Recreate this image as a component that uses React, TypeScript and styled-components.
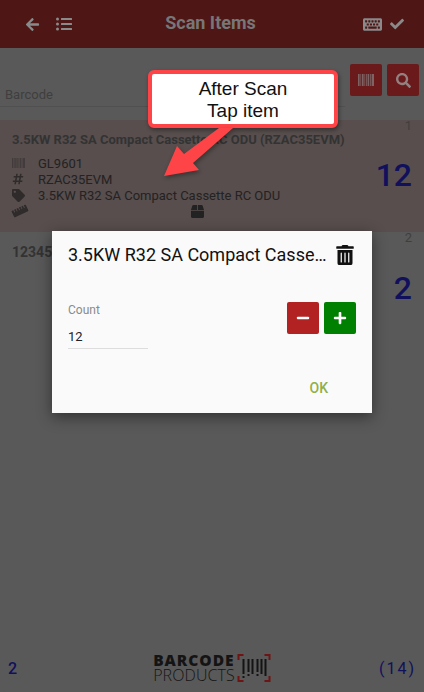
import React from 'react';
import styled, { createGlobalStyle } from 'styled-components';
import {
  FaArrowLeft,
  FaListUl,
  FaKeyboard,
  FaCheck,
  FaSearch,
  FaHashtag,
  FaTag,
  FaRulerHorizontal,
  FaBox,
  FaTrashAlt,
  FaMinus,
  FaPlus,
} from 'react-icons/fa';

const GlobalStyle = createGlobalStyle`
  html, body {
    margin: 0;
    padding: 0;
    background: #454545;
    font-family: Roboto, "Liberation Sans", sans-serif;
  }
  * { box-sizing: border-box; }
`;

const BarsIcon = ({ size, color }: { size: number; color: string }) => (
  <svg width={size} height={size * 0.8} viewBox="0 0 20 16" fill={color}>
    <rect x="0" width="2" height="16" />
    <rect x="3" width="1" height="16" />
    <rect x="5" width="2" height="16" />
    <rect x="8" width="1" height="16" />
    <rect x="10" width="1" height="16" />
    <rect x="12" width="2" height="16" />
    <rect x="15" width="1" height="16" />
    <rect x="17" width="3" height="16" />
  </svg>
);

const App = () => {
  return (
    <>
      <GlobalStyle />
      <Page>
        <Header>
          <HeaderSide>
            <FaArrowLeft size={15} />
            <FaListUl size={16} />
          </HeaderSide>
          <HeaderTitle>Scan Items</HeaderTitle>
          <HeaderRight>
            <FaKeyboard size={19} />
            <FaCheck size={14} />
          </HeaderRight>
        </Header>

        <SearchRow>
          <BarcodeField>Barcode</BarcodeField>
          <SearchButton>
            <BarsIcon size={16} color="#7d6363" />
          </SearchButton>
          <SearchButton>
            <FaSearch size={15} />
          </SearchButton>
        </SearchRow>

        <ItemRow $selected>
          <ItemIndex>1</ItemIndex>
          <ItemTitle>3.5KW R32 SA Compact Cassette RC ODU (RZAC35EVM)</ItemTitle>
          <ItemBody>
            <ItemLines>
              <ItemLine>
                <LineIcon><BarsIcon size={13} color="#423c3c" /></LineIcon>
                GL9601
              </ItemLine>
              <ItemLine>
                <LineIcon><FaHashtag size={12} /></LineIcon>
                RZAC35EVM
              </ItemLine>
              <ItemLine>
                <LineIcon><FaTag size={13} /></LineIcon>
                3.5KW R32 SA Compact Cassette RC ODU
              </ItemLine>
              <ItemLine>
                <LineIcon><Ruler size={16} /></LineIcon>
                <BoxSlot><FaBox size={13} /></BoxSlot>
              </ItemLine>
            </ItemLines>
            <ItemCount>12</ItemCount>
          </ItemBody>
        </ItemRow>

        <ItemRow>
          <ItemIndex>2</ItemIndex>
          <ItemTitle $large>12345</ItemTitle>
          <ItemBody>
            <ItemLines />
            <ItemCount>2</ItemCount>
          </ItemBody>
        </ItemRow>

        <Footer>
          <FooterCount>2</FooterCount>
          <Logo>
            <LogoWords>
              <LogoBold>BARCODE</LogoBold>
              <LogoLight>PRODUCTS</LogoLight>
            </LogoWords>
            <svg width="34" height="28" viewBox="0 0 33 28" fill="none">
              <path d="M1 6V1h5M27 1h5v5M1 22v5h5M27 27h5v-5" stroke="#6e1414" strokeWidth="2" />
              <g fill="#141414">
                <rect x="5" y="5" width="2" height="15" />
                <rect x="5" y="22" width="2" height="2" />
                <rect x="10" y="5" width="2" height="13" />
                <rect x="10" y="20" width="2" height="2" />
                <rect x="14" y="5" width="2" height="15" />
                <rect x="19" y="5" width="2" height="13" />
                <rect x="19" y="20" width="2" height="2" />
                <rect x="23" y="5" width="2" height="15" />
                <rect x="27" y="5" width="2" height="17" />
              </g>
            </svg>
          </Logo>
          <FooterTotal>(14)</FooterTotal>
        </Footer>

        <Callout>
          After Scan
          <br />
          Tap item
        </Callout>
        <ArrowMark width="90" height="60" viewBox="0 0 90 60">
          <path d="M2 49 L15 19 L22 27 L57 1 L71 1 L31 36 L37 43 Z" fill="#ff4447" />
        </ArrowMark>

        <Dialog>
          <DialogHead>
            <DialogTitle>3.5KW R32 SA Compact Cassette RC ODU</DialogTitle>
            <FaTrashAlt size={20} />
          </DialogHead>
          <DialogBody>
            <CountField>
              <CountLabel>Count</CountLabel>
              <CountValue>12</CountValue>
            </CountField>
            <Stepper>
              <StepButton $color="#b22222"><FaMinus size={14} /></StepButton>
              <StepButton $color="#008000"><FaPlus size={14} /></StepButton>
            </Stepper>
          </DialogBody>
          <DialogActions>
            <OkButton>OK</OkButton>
          </DialogActions>
        </Dialog>
      </Page>
    </>
  );
};

export default App;

const Page = styled.div`
  position: relative;
  width: 424px;
  height: 692px;
  overflow: hidden;
  display: flex;
  flex-direction: column;
  background: #595959;
`;

const Header = styled.header`
  height: 48px;
  flex: none;
  display: grid;
  grid-template-columns: 1fr auto 1fr;
  align-items: center;
  padding: 0 20px 0 25px;
  background: #4f1616;
  color: #8a8a8a;
`;

const HeaderSide = styled.div`
  display: flex;
  align-items: center;
  gap: 16px;
`;

const HeaderRight = styled(HeaderSide)`
  justify-content: flex-end;
  gap: 8px;
  padding-left: 1px;
`;

const HeaderTitle = styled.h1`
  margin: 0 0 4px;
  font-size: 18px;
  font-weight: 700;
  color: #777;
  transform: translateX(-4px);
`;

const SearchRow = styled.div`
  height: 72px;
  flex: none;
  display: flex;
  align-items: flex-start;
  gap: 5px;
  padding: 16px 5px 0 0;
`;

const BarcodeField = styled.div`
  flex: 1;
  height: 43px;
  padding: 23px 0 0 5px;
  border-bottom: 1px solid #505050;
  font-size: 13px;
  line-height: 15px;
  color: #3f3f3f;
`;

const SearchButton = styled.div`
  width: 32px;
  height: 32px;
  flex: none;
  display: flex;
  align-items: center;
  justify-content: center;
  border-radius: 2px;
  background: #6a1a1a;
  color: #948080;
`;

const ItemRow = styled.section<{ $selected?: boolean }>`
  position: relative;
  height: ${(p) => (p.$selected ? '112px' : 'auto')};
  flex: none;
  padding: ${(p) => (p.$selected ? '12px' : '13px')} 12px 0;
  background: ${(p) => (p.$selected ? '#574e4d' : 'transparent')};
`;

const ItemIndex = styled.span`
  position: absolute;
  top: -1px;
  right: 12px;
  font-size: 13px;
  line-height: 13px;
  color: #3f3f3f;
`;

const ItemTitle = styled.div<{ $large?: boolean }>`
  font-size: ${(p) => (p.$large ? '14px' : '13px')};
  line-height: 15px;
  font-weight: 700;
  color: #333;
  white-space: nowrap;
`;

const ItemBody = styled.div`
  display: flex;
  align-items: flex-start;
  justify-content: space-between;
  margin-top: 8px;
`;

const ItemLines = styled.div`
  flex: 1;
  min-height: 64px;
`;

const ItemLine = styled.div`
  display: flex;
  align-items: center;
  height: 16px;
  font-size: 13px;
  color: #242222;
`;

const LineIcon = styled.span`
  width: 26px;
  flex: none;
  display: flex;
  align-items: center;
  color: #2f2b2b;
`;

const Ruler = styled(FaRulerHorizontal)`
  transform: rotate(-25deg);
`;

const BoxSlot = styled.span`
  display: flex;
  margin-left: 153px;
  color: #222;
`;

const ItemCount = styled.div`
  font-size: 32px;
  font-weight: 500;
  line-height: 40px;
  color: #10105c;
`;

const Footer = styled.footer`
  height: 48px;
  margin-top: auto;
  flex: none;
  display: grid;
  grid-template-columns: 1fr auto 1fr;
  align-items: center;
  padding: 0 8px;
  background: #595959;
  border-radius: 0 0 6px 6px;
`;

const FooterCount = styled.span`
  font-size: 16px;
  font-weight: 500;
  color: #10105c;
`;

const FooterTotal = styled(FooterCount)`
  justify-self: end;
  font-weight: 400;
  letter-spacing: 2px;
`;

const Logo = styled.div`
  display: flex;
  align-items: center;
  gap: 2px;
`;

const LogoWords = styled.div`
  display: flex;
  flex-direction: column;
  font-family: "Open Sans", sans-serif;
  color: #141414;
`;

const LogoBold = styled.span`
  font-size: 15.5px;
  line-height: 15px;
  font-weight: 800;
  letter-spacing: 1px;
`;

const LogoLight = styled.span`
  font-size: 16px;
  line-height: 15px;
  font-weight: 300;
  letter-spacing: 0.1px;
`;

const Callout = styled.div`
  position: absolute;
  left: 148px;
  top: 70px;
  width: 190px;
  height: 58px;
  padding-top: 4px;
  border: 4px solid #ff4447;
  border-radius: 6px;
  background: #fff;
  font-family: "Liberation Sans", sans-serif;
  font-size: 19px;
  line-height: 22px;
  text-align: center;
  color: #111;
  box-shadow: 1px 2px 4px rgba(0, 0, 0, 0.4);
`;

const ArrowMark = styled.svg`
  position: absolute;
  left: 162px;
  top: 127px;
  filter: drop-shadow(1px 2px 2px rgba(0, 0, 0, 0.35));
`;

const Dialog = styled.div`
  position: absolute;
  left: 52px;
  top: 231px;
  width: 320px;
  height: 182px;
  padding: 12px 16px 0;
  display: flex;
  flex-direction: column;
  background: #fafafa;
  box-shadow: 0 4px 14px rgba(0, 0, 0, 0.45);
  color: #111;
`;

const DialogHead = styled.div`
  display: flex;
  align-items: center;
  justify-content: space-between;
  gap: 8px;
  height: 24px;
  padding-right: 1px;
`;

const DialogTitle = styled.h2`
  margin: 0;
  flex: 1;
  min-width: 0;
  overflow: hidden;
  white-space: nowrap;
  text-overflow: ellipsis;
  font-size: 18px;
  font-weight: 400;
  line-height: 24px;
`;

const DialogBody = styled.div`
  display: flex;
  align-items: flex-start;
  justify-content: space-between;
  margin-top: 35px;
`;

const CountField = styled.div`
  width: 80px;
  height: 47px;
  padding-top: 1px;
  border-bottom: 1px solid #ddd;
`;

const CountLabel = styled.div`
  font-size: 12px;
  line-height: 14px;
  color: #8a8a8a;
`;

const CountValue = styled.div`
  margin-top: 12px;
  font-size: 13px;
  line-height: 16px;
  color: #222;
`;

const Stepper = styled.div`
  display: flex;
  gap: 5px;
`;

const StepButton = styled.div<{ $color: string }>`
  width: 32px;
  height: 32px;
  display: flex;
  align-items: center;
  justify-content: center;
  border-radius: 2px;
  background: ${(p) => p.$color};
  color: #fff;
`;

const DialogActions = styled.div`
  display: flex;
  justify-content: flex-end;
  margin-top: 30px;
  padding-right: 28px;
`;

const OkButton = styled.span`
  font-size: 14px;
  line-height: 18px;
  font-weight: 500;
  color: #8fb04a;
`;
